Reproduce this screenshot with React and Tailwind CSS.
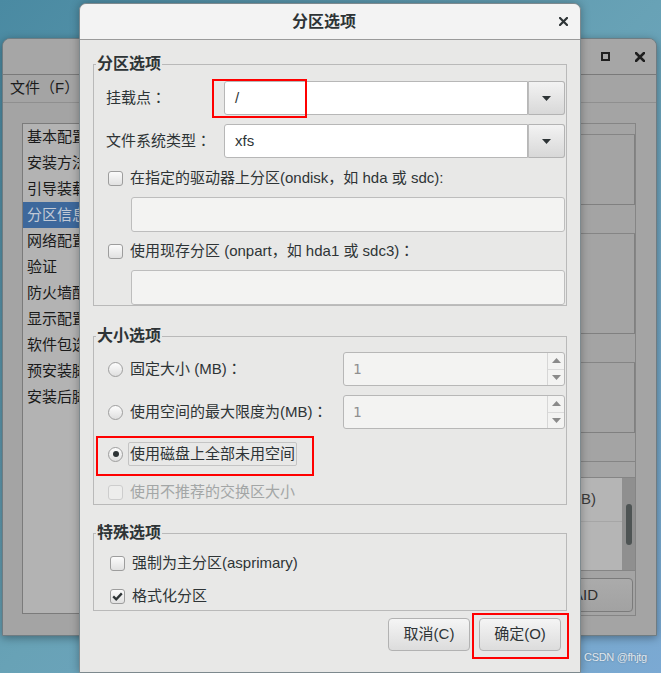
function XIcon({ size = 9, color = "#2e3436", w = 2.2 }) {
  return (
    <svg width={size} height={size} viewBox="0 0 9 9" className="block">
      <path d="M1 1 L8 8 M8 1 L1 8" stroke={color} strokeWidth={w} strokeLinecap="square" />
    </svg>
  );
}

function Down({ color = "#2e3436" }) {
  return (
    <svg width="9" height="5" viewBox="0 0 9 5" className="block">
      <path d="M0 0 H9 L4.5 5 Z" fill={color} />
    </svg>
  );
}

function Up({ color = "#8a8a8a" }) {
  return (
    <svg width="9" height="5" viewBox="0 0 9 5" className="block">
      <path d="M0 5 H9 L4.5 0 Z" fill={color} />
    </svg>
  );
}

function C() {
  return <span className="font-['Noto_Sans_CJK_JP',sans-serif]">：</span>;
}

function Check({ checked, disabled, className = "" }) {
  return (
    <span
      className={`${className} w-[15px] h-[15px] shrink-0 rounded-[3px] border flex items-center justify-center ${
        disabled
          ? "border-[#cdcdcd] bg-[#ededec]"
          : "border-[#9d9d9d] bg-linear-to-b from-[#fbfbfb] to-[#e1e1e1]"
      }`}
    >
      {checked && (
        <svg width="11" height="9" viewBox="0 0 11 9" className="block">
          <path d="M1.2 4.4 L4.2 7.3 L9.8 1.4" stroke="#2e3436" strokeWidth="2.3" fill="none" />
        </svg>
      )}
    </span>
  );
}

function Radio({ checked, className = "" }) {
  return (
    <span
      className={`${className} w-[15px] h-[15px] shrink-0 rounded-full border border-[#9e9e9e] bg-linear-to-b from-[#fdfdfd] to-[#dfdfdf] flex items-center justify-center`}
    >
      {checked && <span className="w-[6px] h-[6px] rounded-full bg-[#2e3436]" />}
    </span>
  );
}

function Combo({ value }) {
  return (
    <div className="flex-1 h-full flex">
      <div className="flex-1 bg-white border border-[#b7b7b7] rounded-l-[3px] flex items-center pl-[10px]">
        {value}
      </div>
      <div className="w-[37px] border border-l-[#bcbcbc] border-[#b3b3b3] border-l rounded-r-[3px] bg-linear-to-b from-[#f3f3f3] to-[#d8d8d8] flex items-center justify-center">
        <Down />
      </div>
    </div>
  );
}

function Spin() {
  return (
    <div className="w-[222px] h-full flex border border-[#b7b7b7] rounded-[3px] bg-[#f3f3f2] overflow-hidden">
      <div className="flex-1 flex items-center pl-[9px] font-['DejaVu_Sans_Mono',monospace] text-[14px] text-[#8f8f8f]">
        1
      </div>
      <div className="w-[17px] border-l border-[#d6d6d6] flex flex-col">
        <div className="flex-1 border-b border-[#dadada] flex items-center justify-center">
          <Up />
        </div>
        <div className="flex-1 flex items-center justify-center">
          <Down color="#8a8a8a" />
        </div>
      </div>
    </div>
  );
}

function Entry() {
  return <div className="ml-[25px] mt-[5px] h-[35px] rounded-[3px] border border-[#bdbdbd] bg-[#f3f3f2]" />;
}

const listItems = [
  "基本配置",
  "安装方法",
  "引导装载",
  "分区信息",
  "网络配置",
  "验证",
  "防火墙配",
  "显示配置",
  "软件包选",
  "预安装脚",
  "安装后脚",
];

export default function App() {
  return (
    <div className="relative w-[661px] h-[673px] overflow-hidden bg-linear-to-br from-[#4a8aa2] via-[#68a2b6] to-[#7ba9d3] font-['Liberation_Sans','Noto_Sans_CJK_SC',sans-serif]">
      {/* background window */}
      <div className="absolute left-[2px] top-[38px] w-[655px] h-[598px] rounded-t-[8px] border border-[#6f7c82] bg-[#a4a4a4] shadow-[0_2px_8px_rgba(0,0,0,0.35)] flex flex-col overflow-hidden">
        <div className="h-[36px] shrink-0 border-b border-[#7a7a7a] bg-[#a6a6a6] flex items-center justify-end gap-[25px] pr-[11px]">
          <span className="w-[9px] h-[9px] border-2 border-[#1f1f1f]" />
          <XIcon size={10} color="#1f1f1f" w={2.4} />
        </div>
        <div className="h-[28px] shrink-0 border-b border-[#8f8f8f] flex items-center pl-[7px] text-[15px] text-[#1c1c1c]">
          文件（F）
        </div>
        <div className="flex items-start pt-[20px] pl-[19px] pr-[20px]">
          <div className="w-[220px] h-[491px] border border-[#7b7b7b] bg-[#b3b3b3] flex flex-col">
            {listItems.map((t, i) => (
              <div
                key={t}
                className={`h-[26px] flex items-center pl-[4px] text-[15px] ${
                  i === 3 ? "bg-[#3d689c] text-[#c2cad6]" : "text-[#1a1a1a]"
                }`}
              >
                {t}
              </div>
            ))}
          </div>
          <div className="flex-1 ml-[20px] h-[493px] border border-[#858585] flex flex-col">
            <div className="h-[11px] border-b border-[#858585]" />
            <div className="h-[70px] border-b border-r border-[#808080]" />
            <div className="h-[29px] border-b border-[#858585]" />
            <div className="h-[100px] border-b border-r border-[#808080]" />
            <div className="h-[29px] border-b border-[#858585]" />
            <div className="h-[70px] border-b border-r border-[#808080]" />
            <div className="h-[29px] border-b border-[#858585]" />
            <div className="h-[16px] border-b border-[#858585]" />
            <div className="h-[93px] border-b border-[#858585] flex">
              <div className="flex-1 bg-[#b5b5b5] flex flex-col">
                <div className="h-[44px] border-b border-[#a6a6a6] flex items-center justify-end pr-[26px] text-[15px] text-[#3a3a3a]">
                  大小(MB)
                </div>
              </div>
              <div className="w-[13px] bg-[#8f8f8f] flex justify-center pt-[26px]">
                <span className="w-[6px] h-[41px] rounded-full bg-[#4e5454]" />
              </div>
            </div>
            <div className="flex-1 pt-[7px] pr-[2px]">
              <div className="h-[34px] rounded-[4px] border border-[#7b7b7b] bg-linear-to-b from-[#ababab] to-[#a2a2a2] flex items-center justify-end pr-[34px] text-[15px] text-[#2e2e2e]">
                RAID
              </div>
            </div>
          </div>
        </div>
      </div>

      {/* dialog */}
      <div className="absolute left-[79px] top-[3px] w-[502px] h-[670px] rounded-t-[7px] border border-[#7d898e] bg-[#e8e8e7] shadow-[0_0_10px_rgba(0,0,0,0.3)] flex flex-col text-[15px] text-[#2e3436]">
        <div className="h-[36px] shrink-0 rounded-t-[7px] bg-[#f3f3f3] border-b border-[#9a9a9a] flex items-center">
          <div className="flex-1" />
          <span className="text-[16px] font-bold">分区选项</span>
          <div className="flex-1 flex justify-end pr-[12px]">
            <XIcon />
          </div>
        </div>

        <div className="px-[13px] pt-[14px] flex flex-col">
          <fieldset className="border border-[#b9b9b9]">
            <legend className="ml-[2px] px-[1px] text-[16px] leading-[20px] font-bold">分区选项</legend>
            <div className="pl-[12px] pr-[1px] flex flex-col">
              <div className="mt-[7px] h-[34px] flex items-center">
                <span className="w-[118px] shrink-0">
                  挂载点<C />
                </span>
                <Combo value="/" />
              </div>
              <div className="mt-[9px] h-[34px] flex items-center">
                <span className="w-[118px] shrink-0">
                  文件系统类型<C />
                </span>
                <Combo value="xfs" />
              </div>
              <div className="mt-[6px] h-[28px] flex items-center">
                <Check className="ml-[2px]" />
                <span className="ml-[7px]">在指定的驱动器上分区(ondisk，如 hda 或 sdc):</span>
              </div>
              <Entry />
              <div className="mt-[5px] h-[28px] flex items-center">
                <Check className="ml-[2px]" />
                <span className="ml-[7px]">
                  使用现存分区 (onpart，如 hda1 或 sdc3)<C />
                </span>
              </div>
              <Entry />
            </div>
          </fieldset>

          <fieldset className="mt-[20px] border border-[#b9b9b9]">
            <legend className="ml-[2px] px-[1px] text-[16px] leading-[20px] font-bold">大小选项</legend>
            <div className="pl-[12px] pr-[1px] flex flex-col">
              <div className="mt-[6px] h-[34px] flex items-center">
                <Radio className="ml-[2px]" />
                <span className="ml-[7px]">
                  固定大小 (MB)<C />
                </span>
                <div className="ml-auto h-full">
                  <Spin />
                </div>
              </div>
              <div className="mt-[9px] h-[34px] flex items-center">
                <Radio className="ml-[2px]" />
                <span className="ml-[7px]">
                  使用空间的最大限度为(MB)<C />
                </span>
                <div className="ml-auto h-full">
                  <Spin />
                </div>
              </div>
              <div className="mt-[8px] h-[34px] flex items-center">
                <Radio checked className="ml-[2px]" />
                <span className="ml-[5px] h-[24px] px-[1px] border border-[#c4c4c4] rounded-[2px] flex items-center">
                  使用磁盘上全部未用空间
                </span>
              </div>
              <div className="mt-[9px] h-[24px] flex items-center">
                <Check disabled className="ml-[2px]" />
                <span className="ml-[7px] text-[#a3a6a6]">使用不推荐的交换区大小</span>
              </div>
            </div>
          </fieldset>

          <fieldset className="mt-[18px] border border-[#b9b9b9]">
            <legend className="ml-[2px] px-[1px] text-[16px] leading-[20px] font-bold">特殊选项</legend>
            <div className="pl-[12px] pr-[1px] flex flex-col">
              <div className="mt-[6px] h-[28px] flex items-center">
                <Check className="ml-[4px]" />
                <span className="ml-[7px]">强制为主分区(asprimary)</span>
              </div>
              <div className="mt-[5px] h-[28px] flex items-center">
                <Check checked className="ml-[4px]" />
                <span className="ml-[7px]">格式化分区</span>
              </div>
            </div>
          </fieldset>

          <div className="mt-[7px] flex justify-end gap-[9px] pr-[6px]">
            <button className="w-[82px] h-[33px] rounded-[4px] border border-[#b2b2b2] bg-linear-to-b from-[#f5f5f5] to-[#dcdcdc] flex items-center justify-center text-[15px] text-[#2e3436]">
              取消(C)
            </button>
            <button className="w-[82px] h-[33px] rounded-[4px] border border-[#b2b2b2] bg-linear-to-b from-[#f5f5f5] to-[#dcdcdc] flex items-center justify-center text-[15px] text-[#2e3436]">
              确定(O)
            </button>
          </div>
        </div>

        {/* red annotation boxes */}
        <div className="absolute left-[132px] top-[75px] w-[95px] h-[39px] border-2 border-[#ff0000]" />
        <div className="absolute left-[16px] top-[432px] w-[218px] h-[40px] border-2 border-[#ff0000]" />
        <div className="absolute left-[392px] top-[609px] w-[97px] h-[46px] border-2 border-[#ff0000]" />
      </div>

      <div className="absolute left-[584px] top-[649px] text-[11px] tracking-[-0.3px] text-white/80 [text-shadow:0_0_2px_rgba(0,0,0,0.35)]">
        CSDN @fhjtg
      </div>
    </div>
  );
}
